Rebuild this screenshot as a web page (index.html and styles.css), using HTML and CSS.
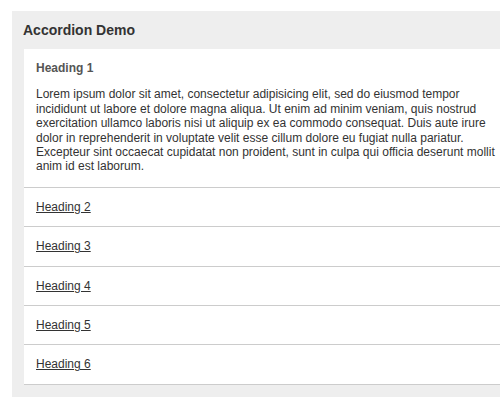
FILE: index.html
```html
<!DOCTYPE html>
<html lang="en">
<head>
    <meta charset="UTF-8">
    <meta name="viewport" content="width=device-width, initial-scale=1.0">
    <title>Accordion Demo</title>
    <link rel="stylesheet" href="styles.css">
</head>
<body>
    <div class="accordion">
        <h3 class="accordion-title">Accordion Demo</h3>
        <div class="accordion-body">
            <div class="item open">
                <div class="item-head">Heading 1</div>
                <div class="item-content">
                    <p>Lorem ipsum dolor sit amet, consectetur adipisicing elit, sed do eiusmod tempor incididunt ut labore et dolore magna aliqua. Ut enim ad minim veniam, quis nostrud exercitation ullamco laboris nisi ut aliquip ex ea commodo consequat. Duis aute irure dolor in reprehenderit in voluptate velit esse cillum dolore eu fugiat nulla pariatur. Excepteur sint occaecat cupidatat non proident, sunt in culpa qui officia deserunt mollit anim id est laborum.</p>
                </div>
            </div>
            <div class="item"><a class="item-head" href="#">Heading 2</a></div>
            <div class="item"><a class="item-head" href="#">Heading 3</a></div>
            <div class="item"><a class="item-head" href="#">Heading 4</a></div>
            <div class="item"><a class="item-head" href="#">Heading 5</a></div>
            <div class="item"><a class="item-head" href="#">Heading 6</a></div>
        </div>
    </div>
</body>
</html>
```

FILE: styles.css
```css
body {
    font-family: 'Liberation Sans', Arial, sans-serif;
    font-size: 12px;
    line-height: 14.4px;
    color: #333;
    margin: 0;
    background: #fff;
    overflow: hidden;
}
.accordion {
    width: 518px;
    margin: 11px 0 0 12px;
    background: #eee;
    padding-bottom: 12px;
}
.accordion-title {
    margin: 0;
    padding: 0 11px;
    height: 38px;
    line-height: 39px;
    font-size: 14px;
    font-weight: bold;
    color: #333;
}
.accordion-body {
    margin: 0 12px;
    background: #fff;
}
.item {
    border-bottom: 1px solid #ccc;
}
.item-head {
    display: block;
    padding: 12px;
    color: #333;
}
a.item-head {
    text-decoration: underline;
}
.item.open .item-head {
    font-weight: bold;
    color: #555;
}
.item-content {
    padding: 0 12px 13px 12px;
}
.item-content p {
    margin: 0;
}
```
